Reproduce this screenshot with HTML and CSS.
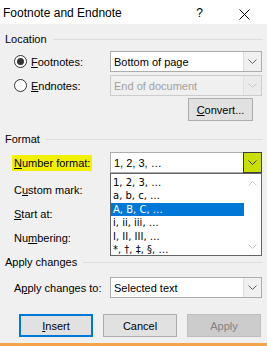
FILE: index.html
```html
<!DOCTYPE html>
<html>
<head>
<meta charset="utf-8">
<link rel="stylesheet" href="styles.css">
</head>
<body>
<div class="window">
  <div class="titlebar">
    <span class="title">Footnote and Endnote</span>
    <span class="help">?</span>
    <span class="close"><svg width="11" height="11" viewBox="0 0 11 11"><path d="M0.5 0.5 L10.5 10.5 M10.5 0.5 L0.5 10.5" stroke="#000" stroke-width="1" fill="none"/></svg></span>
  </div>
  <div class="content">
    <div class="group-head head-location"><span>Location</span><span class="rule"></span></div>
    <div class="row row-foot">
      <label class="field-label radio-label"><span class="radio checked"></span><span><u>F</u>ootnotes:</span></label>
      <div class="select"><span class="value">Bottom of page</span><span class="arrow"><svg width="9" height="5" viewBox="0 0 9 5"><path d="M0.5 0.5 L4.5 4.5 L8.5 0.5" stroke="#606060" fill="none"/></svg></span></div>
    </div>
    <div class="row row-end">
      <label class="field-label radio-label"><span class="radio"></span><span><u>E</u>ndnotes:</span></label>
      <div class="select disabled"><span class="value">End of document</span><span class="arrow"><svg width="9" height="5" viewBox="0 0 9 5"><path d="M0.5 0.5 L4.5 4.5 L8.5 0.5" stroke="#c4c4c4" fill="none"/></svg></span></div>
    </div>
    <div class="row row-convert">
      <button class="btn convert"><u>C</u>onvert...</button>
    </div>
    <div class="group-head head-format"><span>Format</span><span class="rule"></span></div>
    <div class="row row-num">
      <div class="field-label plain"><span class="marker"><u>N</u>umber format:</span></div>
      <div class="select open"><span class="value">1, 2, 3, …</span><span class="arrow hot"><svg width="9" height="5" viewBox="0 0 9 5"><path d="M0.5 0.5 L4.5 4.5 L8.5 0.5" stroke="#333" fill="none"/></svg></span>
        <div class="dropdown">
          <ul class="items">
            <li>1, 2, 3, …</li>
            <li>a, b, c, …</li>
            <li class="selected">A, B, C, …</li>
            <li>i, ii, iii, …</li>
            <li>I, II, III, …</li>
            <li>*, †, ‡, §, …</li>
          </ul>
          <div class="scrollbar">
            <svg width="9" height="5" viewBox="0 0 9 5"><path d="M0.5 4.5 L4.5 0.5 L8.5 4.5" stroke="#c8c8c8" fill="none"/></svg>
            <svg width="9" height="5" viewBox="0 0 9 5"><path d="M0.5 0.5 L4.5 4.5 L8.5 0.5" stroke="#c8c8c8" fill="none"/></svg>
          </div>
        </div>
      </div>
    </div>
    <div class="row row-custom"><div class="field-label plain">C<u>u</u>stom mark:</div></div>
    <div class="row row-start"><div class="field-label plain"><u>S</u>tart at:</div></div>
    <div class="row row-numbering"><div class="field-label plain">Nu<u>m</u>bering:</div></div>
    <div class="group-head head-apply"><span>Apply changes</span><span class="rule"></span></div>
    <div class="row row-apply">
      <div class="field-label plain">A<u>p</u>ply changes to:</div>
      <div class="select"><span class="value">Selected text</span><span class="arrow"><svg width="9" height="5" viewBox="0 0 9 5"><path d="M0.5 0.5 L4.5 4.5 L8.5 0.5" stroke="#606060" fill="none"/></svg></span></div>
    </div>
    <div class="buttons">
      <button class="btn default"><u>I</u>nsert</button>
      <button class="btn">Cancel</button>
      <button class="btn disabled">Apply</button>
    </div>
  </div>
  <div class="edge"></div>
</div>
</body>
</html>
```

FILE: styles.css
```css
* { box-sizing: border-box; }
html, body { margin: 0; padding: 0; }
body {
  width: 267px;
  height: 346px;
  overflow: hidden;
  background: #f0f0f0;
  font-family: "Liberation Sans", Arial, sans-serif;
  font-size: 11px;
  color: #000;
}
u { text-decoration: underline; text-underline-offset: 1px; }
.window {
  width: 267px;
  height: 346px;
  display: flex;
  flex-direction: column;
  background: #f0f0f0;
}
.titlebar {
  height: 24px;
  flex: none;
  background: #fff;
  display: flex;
  align-items: center;
  padding-left: 3px;
  font-size: 12px;
}
.title { flex: 1; padding-top: 1px; }
.help {
  width: 25px;
  text-align: center;
  margin-right: 10px;
  font-size: 12px;
  padding-top: 2px;
}
.close {
  width: 45px;
  display: flex;
  justify-content: center;
  align-items: center;
  padding-top: 4px;
}
.content {
  flex: 1;
  display: flex;
  flex-direction: column;
  padding: 0 4px 0 5px;
}
.group-head {
  height: 14px;
  display: flex;
  align-items: center;
  color: #000;
}
.group-head .rule {
  flex: 1;
  height: 1px;
  background: #dcdcdc;
  margin-left: 6px;
}
.head-location { margin-top: 8px; }
.head-format { margin-top: 11px; }
.head-apply { margin-top: 7px; }
.row {
  display: flex;
  align-items: center;
  height: 21px;
  padding-left: 9px;
}
.row-foot { margin-top: 5px; }
.row-end { margin-top: 3px; }
.row-convert { margin-top: 2px; height: 23px; justify-content: flex-end; padding-right: 10px; }
.row-num { margin-top: 6px; }
.row-custom { margin-top: 6px; }
.row-start { margin-top: 3px; }
.row-numbering { margin-top: 3px; }
.row-apply { margin-top: 8px; }
.field-label {
  width: 96px;
  flex: none;
  display: flex;
  align-items: center;
}
.radio-label { gap: 4px; }
.radio {
  width: 13px;
  height: 13px;
  border: 1px solid #333;
  border-radius: 50%;
  background: #fff;
  display: flex;
  align-items: center;
  justify-content: center;
}
.radio.checked::after {
  content: "";
  width: 7px;
  height: 7px;
  border-radius: 50%;
  background: #333;
}
.marker {
  background: #f2f200;
  margin-left: -2px;
  padding: 2px 2px 2px 2px;
  display: inline-block;
  line-height: 12px;
}
.select {
  position: relative;
  width: 152px;
  height: 21px;
  border: 1px solid #adadad;
  background: #fff;
  display: flex;
  align-items: center;
}
.select .value {
  flex: 1;
  padding-left: 3px;
  padding-top: 1px;
}
.select .arrow {
  width: 18px;
  height: 19px;
  border-left: 1px solid #dcdcdc;
  background: #f0f0f0;
  display: flex;
  align-items: center;
  justify-content: center;
}
.select.disabled {
  border-color: #cccccc;
  background: #f0f0f0;
  color: #a0a0a0;
}
.select.disabled .arrow { border-left-color: #e0e0e0; background: #ebebeb; }
.select .arrow.hot {
  background: #c9df00;
  border: 1px solid #3c3c3c;
  height: 21px;
  width: 19px;
  margin-right: -1px;
}
.dropdown {
  position: absolute;
  left: -1px;
  top: 20px;
  width: 152px;
  height: 83px;
  background: #fff;
  border: 1px solid #646464;
  display: flex;
  overflow: hidden;
  z-index: 5;
}
.items {
  list-style: none;
  margin: 0;
  padding: 2px 0 0 0;
  flex: 1;
  font-family: "DejaVu Sans", Tahoma, sans-serif;
  font-size: 10px;
}
.items li {
  height: 13.4px;
  line-height: 13px;
  padding-left: 2px;
  white-space: nowrap;
}
.items li.selected {
  background: #0078d7;
  color: #fff;
}
.scrollbar {
  width: 17px;
  flex: none;
  display: flex;
  flex-direction: column;
  justify-content: space-between;
  align-items: center;
  padding: 7px 0 6px 0;
}
.buttons {
  margin-top: 16px;
  display: flex;
  gap: 10px;
  padding-left: 14px;
}
.btn {
  width: 74px;
  height: 23px;
  border: 1px solid #adadad;
  background: #e1e1e1;
  font-family: "Liberation Sans", Arial, sans-serif;
  font-size: 11px;
  color: #000;
  padding: 0;
}
.btn.convert { width: 65px; }
.btn.default { border: 2px solid #0078d7; }
.btn.disabled { background: #cccccc; border-color: #bfbfbf; color: #838383; }
.edge {
  height: 3px;
  flex: none;
  background: #f2a54c;
}
```
